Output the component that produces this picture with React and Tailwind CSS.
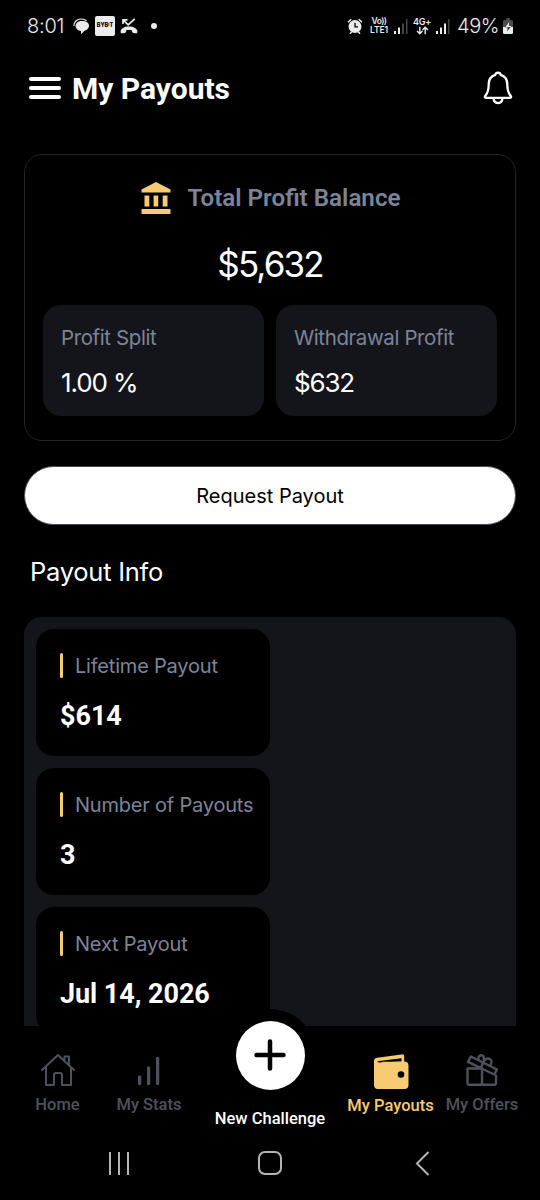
import React from "react";

const payouts = [
  { label: "Lifetime Payout", value: "$614" },
  { label: "Number of Payouts", value: "3" },
  { label: "Next Payout", value: "Jul 14, 2026" },
];

function StatusBar() {
  return (
    <div className="h-[52px] shrink-0 flex items-center justify-between pl-[27px] pr-[27px] text-[#ececec] font-['Inter',sans-serif]">
      <div className="flex items-center">
        <span className="w-[46px] text-[20px] leading-none tracking-[-0.2px] font-light">8:01</span>
        <svg width="17" height="17" viewBox="0 0 17 17">
          <path d="M1 8C.8 4 3.800 1 8.200 1c2.300 0 4.200.7 5.400 1.900" fill="none" stroke="currentColor" strokeWidth="1.200" />
          <path d="M9.300 3c4 0 6.700 2 6.700 4.800 0 2.400-1.800 4.200-4.500 4.900L8 16.300v-3.400C4.900 12.500 2.600 10.500 2.600 7.900 2.600 5 5.300 3 9.300 3Z" fill="currentColor" />
        </svg>
        <span className="ml-[5px] w-[20px] h-[20px] rounded-[2px] bg-[#ececec] text-black flex items-center justify-center text-[5.5px] leading-none font-extrabold">
          BYB<span className="-mt-[2px] text-[4px]">I</span>T
        </span>
        <svg className="ml-[5px]" width="18" height="18" viewBox="0 0 18 18">
          <path d="M3 7V2.800h4.500M3.300 3.100 8.200 7.800l6.500-6" fill="none" stroke="currentColor" strokeWidth="1.700" />
          <path d="M.6 14.800C.6 11.600 4.300 9.600 9 9.600s8.400 2 8.400 5.200c0 1.300-.7 1.700-1.700 1.500l-2.500-.4c-.9-.2-1.300-.6-1.300-1.300v-1.300c-1.900-.5-3.900-.5-5.800 0v1.300c0 .7-.4 1.100-1.300 1.300l-2.500.4C1.300 16.500.6 16.100.6 14.800Z" fill="currentColor" />
        </svg>
        <span className="ml-[13px] w-[6px] h-[6px] rounded-full bg-[#ececec]" />
      </div>

      <div className="flex items-center">
        <svg width="16" height="17" viewBox="0 0 16 17">
          <circle cx="8" cy="8.500" r="6.500" fill="currentColor" />
          <path d="M1 4.300 4.200 1.300M15 4.300l-3.200-3M3 15.800l1.700-2M13 15.800l-1.700-2" stroke="currentColor" strokeWidth="1.500" />
          <path d="M8 4.800v4h3" fill="none" stroke="#000" strokeWidth="1.300" />
        </svg>
        <div className="ml-[6px] w-[20px] flex flex-col items-center text-[8.500px] leading-[9px] font-semibold">
          <span className="tracking-[-0.5px]">Vo))</span>
          <span className="tracking-[-0.1px]">LTE1</span>
        </div>
        <Signal weak />
        <div className="ml-[5px] w-[18px] flex flex-col items-center text-[9px] leading-[9px] font-semibold">
          <span className="tracking-[-0.3px]">4G+</span>
          <svg width="13" height="9" viewBox="0 0 12 8" fill="none" stroke="currentColor" strokeWidth="1.3">
            <path d="M3.500 .5v6.300M1 4.500l2.500 2.500L6 4.500M8.500 7.500V1.200M6 3.500 8.500 1 11 3.500" />
          </svg>
        </div>
        <Signal />
        <span className="ml-[7px] w-[42px] text-[20px] leading-none tracking-[-0.4px] font-light">49%</span>
        <svg className="ml-[4px]" width="10" height="16" viewBox="0 0 11 16" preserveAspectRatio="none">
          <path d="M3.500 0h4v2H3.500zM1.500 2h8A1.500 1.500 0 0 1 11 3.500V9H0V3.500A1.500 1.500 0 0 1 1.500 2Z" fill="#4a4a4a" />
          <path d="M0 9h11v5.500a1.500 1.500 0 0 1-1.500 1.500h-8A1.500 1.500 0 0 1 0 14.500Z" fill="currentColor" />
          <path d="M6.800 4 2.500 9.500h6L8.800 8H6.300Z" fill="#fff" />
          <path d="M4.600 13.500 8.400 9H2.600l.2.600h2.400Z" fill="#333" />
        </svg>
      </div>
    </div>
  );
}

function Signal({ weak }) {
  return (
    <svg className="ml-[5px]" width="14" height="15" viewBox="0 0 14 15">
      <path d="M0 12h2v3H0z" fill="currentColor" />
      <path d="M4 8.500h2V15H4z" fill="currentColor" />
      <path d="M8 4.500h2V15H8z" fill={weak ? "#444" : "currentColor"} />
      <path d="M12 0h1.500v15H12z" fill="#444" />
    </svg>
  );
}

function Header() {
  return (
    <header className="h-[72px] shrink-0 flex items-center justify-between pl-[29px] pr-[27px]">
      <div className="flex items-center">
        <div className="flex flex-col gap-[5px]">
          <span className="w-[32px] h-[4px] rounded-full bg-white" />
          <span className="w-[32px] h-[4px] rounded-full bg-white" />
          <span className="w-[32px] h-[4px] rounded-full bg-white" />
        </div>
        <h1 className="mt-[1px] ml-[11px] text-[30px] leading-none font-bold text-white whitespace-nowrap">My Payouts</h1>
      </div>
      <svg width="30" height="34" viewBox="0 0 30 34" fill="none" stroke="#fff" strokeWidth="2.300" strokeLinejoin="round">
        <path d="M12.200 3.900a2.900 2.900 0 0 1 5.600 0c3.700 1.200 6.500 4.700 6.500 9.600 0 6.200.9 8.500 3.400 11.500.8 1 .3 1.900-.9 1.900H3.200c-1.200 0-1.700-.9-.9-1.900 2.500-3 3.400-5.300 3.400-11.500 0-4.900 2.800-8.400 6.500-9.600Z" />
        <path d="M10.500 27.200c.2 3 2 4.900 4.500 4.900s4.300-1.900 4.500-4.900" />
      </svg>
    </header>
  );
}

function BalanceCard() {
  return (
    <section className="mt-[30px] mx-6 h-[287px] shrink-0 rounded-[18px] border border-[#24242a] px-[18px]">
      <div className="mt-[25px] h-[36px] pl-[2px] flex items-center justify-center">
        <svg width="30" height="32" viewBox="0 0 30 32" fill="#f8cb73">
          <path d="M15 0 29.500 7.500V10.500H.5V7.500ZM3.500 13.500H8.300v11H3.500zM12.600 13.500h4.600v11h-4.600zM21.700 13.500h4.800v11h-4.800zM.5 27h29V32H.5z" />
        </svg>
        <h2 className="ml-[16px] text-[24.200px] leading-none font-semibold text-[#7d8498] whitespace-nowrap">
          Total Profit Balance
        </h2>
      </div>
      <p className="mt-[28px] h-[40px] flex items-center justify-center text-[35px] leading-none tracking-[-1.900px] text-white font-['Inter',sans-serif]">
        $5,632
      </p>
      <div className="mt-[21px] grid grid-cols-2 gap-3 font-['Inter',sans-serif] whitespace-nowrap">
        <div className="h-[111px] rounded-[18px] bg-[#14151b] px-[18px] pt-5">
          <p className="h-[26px] flex items-center text-[20.500px] font-normal tracking-[-0.4px] text-[#7d8498]">Profit Split</p>
          <p className="mt-[13px] h-[36px] flex items-center text-[26px] tracking-[-1.100px] text-white">1.00 %</p>
        </div>
        <div className="h-[111px] rounded-[18px] bg-[#14151b] px-[18px] pt-5">
          <p className="h-[26px] flex items-center text-[20.500px] font-normal tracking-[-0.4px] text-[#7d8498]">Withdrawal Profit</p>
          <p className="mt-[13px] h-[36px] flex items-center text-[26px] tracking-[-1.200px] text-white">$632</p>
        </div>
      </div>
    </section>
  );
}

function PayoutInfo() {
  return (
    <section className="mt-[33px] mx-6 font-['Inter',sans-serif]">
      <h2 className="h-[28px] pl-[6px] flex items-center text-[25.500px] tracking-[-0.250px] text-white">Payout Info</h2>
      <div className="mt-[31px] rounded-t-[18px] bg-[#14151b] p-3 flex flex-col gap-[12px]">
        {payouts.map((item) => (
          <div key={item.label} className="w-[234px] h-[127px] shrink-0 rounded-[18px] bg-black pl-6 pt-6 whitespace-nowrap">
            <div className="h-[25px] flex items-center">
              <span className="w-[3px] h-[25px] rounded-full bg-[#f8cb73]" />
              <span className="ml-[12px] text-[20px] font-normal tracking-[-0.200px] text-[#7d8498]">{item.label}</span>
            </div>
            <p className="mt-[20px] h-[36px] flex items-center font-['Roboto',sans-serif] text-[27px] tracking-[-0.050px] font-bold text-white">
              {item.value}
            </p>
          </div>
        ))}
      </div>
    </section>
  );
}

function HomeIcon() {
  return (
    <svg width="34" height="32" viewBox="0 0 34 32" fill="none" stroke="currentColor" strokeWidth="2" strokeLinejoin="round" strokeLinecap="round">
      <path d="M1 16 17 1l16 15M5 13.500V31h8V21a2 2 0 0 1 2-2h4a2 2 0 0 1 2 2v10h9V13.500M23.500 6V2.500h4.500v8.500" />
    </svg>
  );
}

function StatsIcon() {
  return (
    <svg width="24" height="28" viewBox="0 0 24 28" fill="currentColor">
      <rect x="1" y="18.500" width="3.200" height="9.500" rx="1" />
      <rect x="10" y="9.500" width="3.200" height="18.500" rx="1" />
      <rect x="19" y="0" width="3.200" height="28" rx="1" />
    </svg>
  );
}

function WalletIcon() {
  return (
    <svg width="36" height="36" viewBox="0 0 36 36">
      <path d="M1 7C1 4.800 2.200 4 4.200 3.700L28.500.4c1.900-.2 2.700.6 2.700 2.400V7.600C34 7.600 35.500 8.800 35.500 11.500v19.500c0 2.700-1.400 4-4 4H5c-2.600 0-4-1.300-4-4Z" fill="#f8cb73" />
      <path d="M4.500 7.300 28.500 4.200v3.400L6 8.500c-1.200 0-1.700-.8-1.500-1.200Z" fill="#000" />
      <path d="M10 7.700H31v1.500H8Z" fill="#f8cb73" />
      <circle cx="28" cy="20.500" r="3.300" fill="#000" />
    </svg>
  );
}

function GiftIcon() {
  return (
    <svg width="32" height="32" viewBox="0 0 32 32" fill="none" stroke="currentColor" strokeWidth="2.400" strokeLinejoin="round">
      <path d="M11 14.500H1.500V29a1.800 1.800 0 0 0 1.800 1.800h25A1.800 1.800 0 0 0 30 29V20.500M16 14.500v16.300M11 14.500h6" />
      <path d="M5 2.500 31 15.500l-2.800 5L2 7.800Z" />
      <path d="m17.300 8.600-2.500 5" />
      <path d="M12.600 6C11.700 3.200 13.200 1.300 15.200 1.300c2.500 0 3.600 2.800 2.100 7.300M17.300 8.600c1.400-3.700 4.400-5 6.700-3.500 2.200 1.400 2 4.200 0 6.300" />
    </svg>
  );
}

function BottomNav() {
  return (
    <nav className="h-[100px] shrink-0 flex text-[16.500px] leading-none font-medium text-[#4e515d] whitespace-nowrap">
      <div className="w-[115px] flex flex-col items-center pt-[28px]">
        <HomeIcon />
        <span className="mt-[11px]">Home</span>
      </div>
      <div className="w-[68px] flex flex-col items-center pt-[31px]">
        <StatsIcon />
        <span className="mt-[12px]">My Stats</span>
      </div>
      <div className="relative w-[174px] flex flex-col items-center text-white">
        <div className="-mt-[17px] w-[92px] h-[92px] shrink-0 rounded-full bg-black flex items-center justify-center">
          <div className="w-[69px] h-[69px] rounded-full bg-white flex items-center justify-center">
            <svg width="32" height="32" viewBox="0 0 32 32" stroke="#000" strokeWidth="4.500" strokeLinecap="round">
              <path d="M16 2.500v27M2.500 16h27" />
            </svg>
          </div>
        </div>
        <span className="mt-[10px]">New Challenge</span>
      </div>
      <div className="w-[67px] flex flex-col items-center pt-[28px] text-[#f8cb73]">
        <WalletIcon />
        <span className="mt-[8px]">My Payouts</span>
      </div>
      <div className="w-[116px] flex flex-col items-center pt-[28px]">
        <GiftIcon />
        <span className="mt-[11px]">My Offers</span>
      </div>
    </nav>
  );
}

function SystemBar() {
  return (
    <div className="h-[74px] shrink-0 flex items-center justify-between pl-[109px] pr-[110px]">
      <div className="flex gap-[7px]">
        <span className="w-[2px] h-[23px] bg-[#b5b5b5]" />
        <span className="w-[2px] h-[23px] bg-[#b5b5b5]" />
        <span className="w-[2px] h-[23px] bg-[#b5b5b5]" />
      </div>
      <span className="-ml-[5px] w-[24px] h-[24px] rounded-[7px] border-2 border-[#b5b5b5]" />
      <svg width="15" height="25" viewBox="0 0 15 25" fill="none" stroke="#b5b5b5" strokeWidth="2">
        <path d="M13.500 1 2 12.500l11.500 11.500" />
      </svg>
    </div>
  );
}

export default function App() {
  return (
    <div className="w-[540px] h-[1200px] bg-black flex flex-col overflow-hidden font-['Roboto',sans-serif]">
      <StatusBar />
      <main className="h-[974px] shrink-0 flex flex-col overflow-hidden">
        <Header />
        <BalanceCard />
        <button className="mt-[25px] mx-6 h-[59px] shrink-0 rounded-full border border-[#4a4b55] bg-white text-black text-[20px] font-['Inter',sans-serif]">
          Request Payout
        </button>
        <PayoutInfo />
      </main>
      <BottomNav />
      <SystemBar />
    </div>
  );
}
